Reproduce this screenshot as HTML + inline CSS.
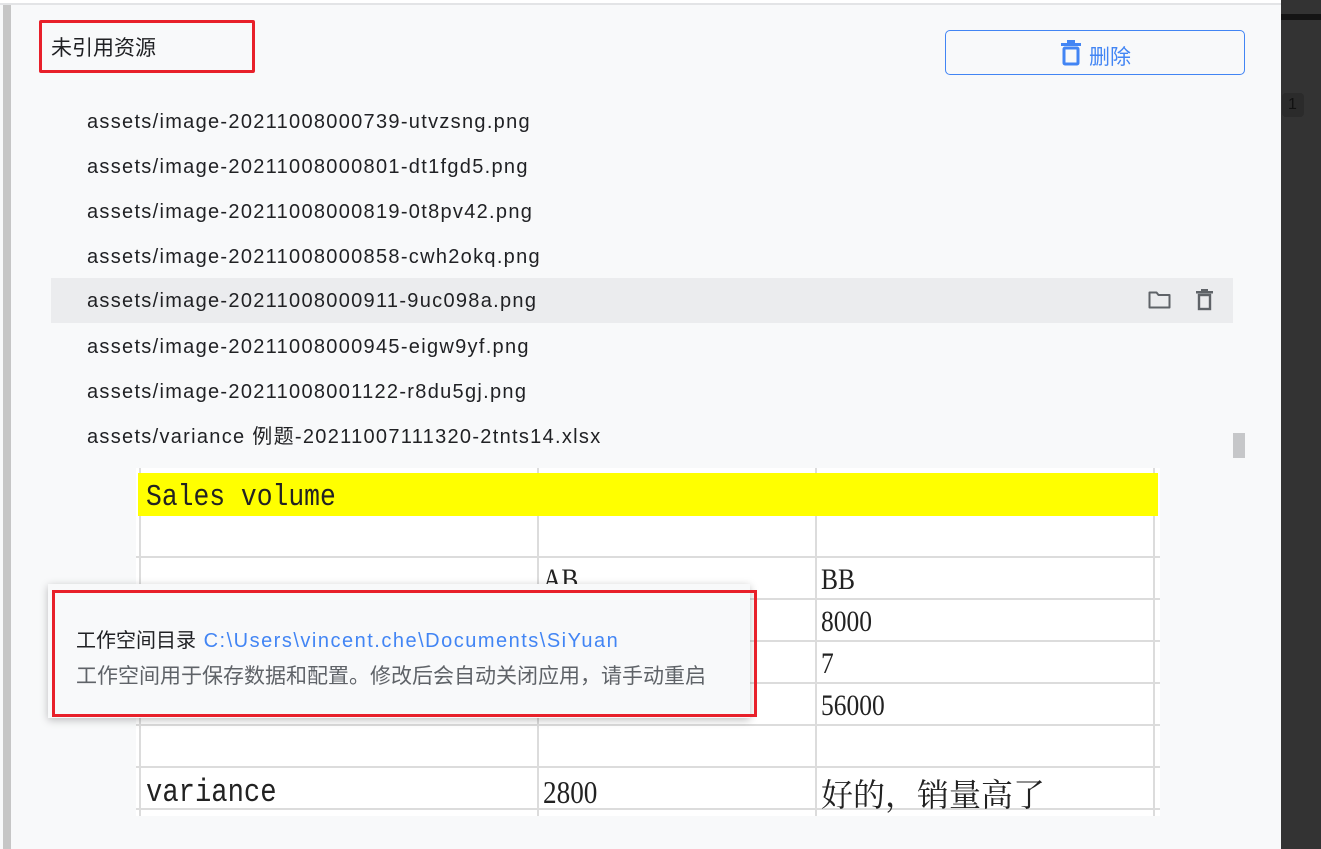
<!DOCTYPE html>
<html><head><meta charset="utf-8"><style>
*{margin:0;padding:0;box-sizing:border-box}
body{width:1321px;height:849px;overflow:hidden;background:#f8f9fa;position:relative;font-family:"Liberation Sans","Noto Sans CJK SC",sans-serif}
.abs{position:absolute}
.item{position:absolute;left:87px;font-size:20px;color:#202124;line-height:24px;letter-spacing:1.3px;white-space:nowrap}
.tbl{position:absolute;left:136px;top:468px;width:1024px;height:348px;background:#fff}
.h{position:absolute;left:0;width:1024px;height:2px;background:#dcdcdc}
.v{position:absolute;top:0;width:2px;height:348px;background:#dcdcdc}
.c{position:absolute;font-family:"Liberation Serif","Noto Serif CJK SC",serif;font-size:30px;color:#222;transform:scaleX(.85);transform-origin:left;white-space:nowrap}
</style></head><body>
<div class="abs" style="left:0;top:0;width:1281px;height:5px;background:#fff;border-bottom:2px solid #e3e4e6"></div>
<div class="abs" style="left:3px;top:5px;width:8px;height:844px;background:#c6c6c6"></div>
<div class="abs" style="left:1281px;top:0;width:40px;height:849px;background:#333"></div>
<div class="abs" style="left:1281px;top:14px;width:40px;height:6px;background:#141414"></div>
<div class="abs" style="left:1282px;top:93px;width:22px;height:24px;background:#2b2b2b;color:#111;font-size:16px;padding-left:6px;line-height:24px;border-radius:4px">1</div>

<div class="abs" style="left:39px;top:20px;width:216px;height:53px;border:3px solid #e8202a;border-radius:2px"></div>
<div class="abs" style="left:51px;top:32px;font-size:21px;color:#202124">未引用资源</div>

<div class="abs" style="left:945px;top:30px;width:300px;height:45px;border:1px solid #4285f4;border-radius:5px"></div>
<svg class="abs" style="left:1060px;top:40px" width="22" height="26" viewBox="0 0 22 26"><rect x="1" y="3" width="20" height="3" fill="#4285f4"/><rect x="7" y="0" width="8" height="3" fill="#4285f4"/><rect x="4" y="8" width="14" height="16" fill="none" stroke="#4285f4" stroke-width="3" rx="1"/></svg>
<div class="abs" style="left:1089px;top:41px;font-size:21px;color:#4285f4">删除</div>

<div class="item" style="top:110px">assets/image-20211008000739-utvzsng.png</div>
<div class="item" style="top:155px">assets/image-20211008000801-dt1fgd5.png</div>
<div class="item" style="top:200px">assets/image-20211008000819-0t8pv42.png</div>
<div class="item" style="top:245px">assets/image-20211008000858-cwh2okq.png</div>
<div class="abs" style="left:51px;top:278px;width:1182px;height:45px;background:#ebecee"></div>
<div class="item" style="top:289px">assets/image-20211008000911-9uc098a.png</div>
<svg class="abs" style="left:1148px;top:290px" width="24" height="20" viewBox="0 0 24 20"><path d="M1.5 2.5h7l2 2.5h11v12.5h-20z" fill="none" stroke="#5f6368" stroke-width="2" stroke-linejoin="round"/></svg>
<svg class="abs" style="left:1195px;top:289px" width="20" height="22" viewBox="0 0 20 22"><rect x="1" y="2" width="17" height="2.5" fill="#5f6368"/><rect x="6" y="0" width="7" height="2" fill="#5f6368"/><rect x="4" y="6" width="11" height="14" fill="none" stroke="#5f6368" stroke-width="2.4"/></svg>
<div class="item" style="top:335px">assets/image-20211008000945-eigw9yf.png</div>
<div class="item" style="top:380px">assets/image-20211008001122-r8du5gj.png</div>
<div class="item" style="top:425px">assets/variance 例题-20211007111320-2tnts14.xlsx</div>
<div class="abs" style="left:1233px;top:433px;width:12px;height:25px;background:#c6c7c9"></div>

<div class="tbl">
<div class="v" style="left:3px"></div><div class="v" style="left:401px;top:0"></div><div class="v" style="left:679px"></div><div class="v" style="left:1017px"></div>
<div class="abs" style="left:2px;top:5px;width:1020px;height:43px;background:#ffff00"></div>
<div class="h" style="top:88px"></div><div class="h" style="top:130px"></div><div class="h" style="top:172px"></div><div class="h" style="top:214px"></div><div class="h" style="top:256px"></div><div class="h" style="top:298px"></div><div class="h" style="top:340px"></div>
<div class="c" style="left:10px;top:12px;font-family:'Liberation Mono',monospace;font-size:31px">Sales volume</div>
<div class="c" style="left:407px;top:95px">AB</div>
<div class="c" style="left:685px;top:95px">BB</div>
<div class="c" style="left:685px;top:137px">8000</div>
<div class="c" style="left:685px;top:179px">7</div>
<div class="c" style="left:685px;top:221px">56000</div>
<div class="c" style="left:10px;top:306px;font-family:'Liberation Mono',monospace;font-size:32px">variance</div>
<div class="c" style="left:407px;top:306px;font-size:32px">2800</div>
<div class="c" style="left:685px;top:302px;font-size:32px;transform:none">好的，销量高了</div>
</div>

<div class="abs" style="left:48px;top:584px;width:702px;height:134px;background:#f8f9fa;box-shadow:0 2px 8px rgba(0,0,0,.25)"></div>
<div class="abs" style="left:52px;top:590px;width:705px;height:127px;border:3px solid #e8202a"></div>
<div class="abs" style="left:76px;top:624px;font-size:20px;color:#202124;white-space:nowrap">工作空间目录 <span style="color:#4285f4;margin-left:2px;letter-spacing:1.5px">C:\Users\vincent.che\Documents\SiYuan</span></div>
<div class="abs" style="left:76px;top:660px;font-size:21px;color:#5f6368;white-space:nowrap">工作空间用于保存数据和配置。修改后会自动关闭应用，请手动重启</div>
</body></html>
